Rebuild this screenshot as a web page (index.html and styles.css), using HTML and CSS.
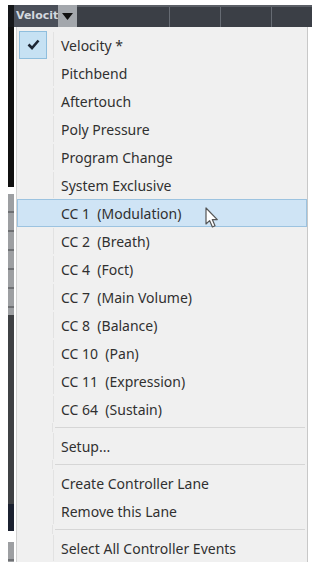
FILE: index.html
```html
<!DOCTYPE html>
<html lang="en">
<head>
<meta charset="utf-8">
<title>Controller lane menu</title>
<link rel="stylesheet" href="styles.css">
</head>
<body>
	<div class="screen">
		<!-- lane header strip -->
		<div class="header">
			<div class="hdr_edge"></div>
			<div class="lane_label">Velocit</div>
			<div class="lane_arrow">
				<svg width="11" height="7" viewBox="0 0 11 7"><path d="M0 0 L11 0 L5.5 7 Z" fill="#111"/></svg>
			</div>
			<div class="hdr_cells">
				<span class="cell c1"></span>
				<span class="cell c2"></span>
				<span class="cell c3"></span>
				<span class="cell c4"></span>
			</div>
		</div>

		<div class="main">
			<!-- left editor edge -->
			<div class="ruler">
				<div class="seg black" style="height: 163px"></div>
				<div class="seg blank" style="height: 7px"></div>
				<div class="seg ticks" style="height: 123px"></div>
				<div class="seg dark" style="height: 193px"></div>
				<div class="seg navy" style="height: 27px"></div>
				<div class="seg blank" style="height: 12px"></div>
				<div class="seg ticks" style="height: 20px"></div>
			</div>

			<div class="menu">
				<div class="item checked">
					<span class="gutter">
						<span class="check_box">
							<svg width="13" height="11" viewBox="0 0 13 11"><path d="M1.5 5.5 L5 9 L11.5 1.5" fill="none" stroke="#1d2633" stroke-width="2.6"/></svg>
						</span>
					</span>
					<span class="label">Velocity *</span>
				</div>
				<div class="item"><span class="gutter"></span><span class="label">Pitchbend</span></div>
				<div class="item"><span class="gutter"></span><span class="label">Aftertouch</span></div>
				<div class="item"><span class="gutter"></span><span class="label">Poly Pressure</span></div>
				<div class="item"><span class="gutter"></span><span class="label">Program Change</span></div>
				<div class="item"><span class="gutter"></span><span class="label">System Exclusive</span></div>
				<div class="item hover"><span class="gutter"></span><span class="label">CC 1&nbsp; (Modulation)</span></div>
				<div class="item"><span class="gutter"></span><span class="label">CC 2&nbsp; (Breath)</span></div>
				<div class="item"><span class="gutter"></span><span class="label">CC 4&nbsp; (Foct)</span></div>
				<div class="item"><span class="gutter"></span><span class="label">CC 7&nbsp; (Main Volume)</span></div>
				<div class="item"><span class="gutter"></span><span class="label">CC 8&nbsp; (Balance)</span></div>
				<div class="item"><span class="gutter"></span><span class="label">CC 10&nbsp; (Pan)</span></div>
				<div class="item"><span class="gutter"></span><span class="label">CC 11&nbsp; (Expression)</span></div>
				<div class="item"><span class="gutter"></span><span class="label">CC 64&nbsp; (Sustain)</span></div>
				<div class="sep"><span class="gutter"></span><span class="line"></span></div>
				<div class="item"><span class="gutter"></span><span class="label">Setup...</span></div>
				<div class="sep"><span class="gutter"></span><span class="line"></span></div>
				<div class="item"><span class="gutter"></span><span class="label">Create Controller Lane</span></div>
				<div class="item"><span class="gutter"></span><span class="label">Remove this Lane</span></div>
				<div class="sep"><span class="gutter"></span><span class="line"></span></div>
				<div class="item"><span class="gutter"></span><span class="label">Select All Controller Events</span></div>

				<!-- mouse pointer over the hovered entry -->
				<svg class="pointer" width="14" height="22" viewBox="0 0 14 22">
					<path d="M1 1 L1 17 L4.6 13.6 L7.4 20 L10 18.8 L7.3 12.6 L12.3 12.6 Z" fill="#fff" stroke="#555" stroke-width="1.2" stroke-linejoin="round"/>
				</svg>
			</div>
		</div>
	</div>
</body>
</html>
```

FILE: styles.css
```css
* {
	box-sizing: border-box;
}

html, body {
	margin: 0;
	padding: 0;
	background: #ffffff;
	overflow: hidden;
}

.screen {
	width: 312px;
	height: 562px;
	padding: 5px 0 0 8px;
	display: flex;
	flex-direction: column;
}

/* header strip */
.header {
	height: 22px;
	display: flex;
	flex-shrink: 0;
}

.hdr_edge {
	width: 6px;
	background: #15171a;
}

.lane_label {
	width: 44px;
	background: #4a4f59;
	color: #d3d8df;
	font: bold 11px "DejaVu Sans", sans-serif;
	line-height: 22px;
	padding-left: 2px;
	white-space: nowrap;
}

.lane_arrow {
	width: 19px;
	background: #a3a7ac;
	display: flex;
	align-items: center;
	justify-content: center;
}

.hdr_cells {
	flex: 1;
	display: flex;
	background: #3b3f46;
	border-top: 2px solid #5b5f66;
}

.cell {
	border-right: 1px solid #666b73;
}

.c1 { width: 93px; }
.c2 { width: 51px; }
.c3 { width: 51px; }
.c4 { flex: 1; border-right: none; }

/* body area */
.main {
	flex: 1;
	display: flex;
	gap: 2px;
	min-height: 0;
}

.ruler {
	width: 6px;
	display: flex;
	flex-direction: column;
}

.seg.black { background: #101010; }
.seg.blank { background: #ffffff; }
.seg.dark { background: #3f4144; }
.seg.navy { background: #1b2130; }
.seg.ticks {
	background: repeating-linear-gradient(to bottom, #9d9fa2 0, #9d9fa2 17px, #6f7174 17px, #6f7174 19px);
}

/* popup menu */
.menu {
	position: relative;
	width: 292px;
	padding-top: 4px;
	background: #f0f0f0;
	border-left: 1px solid #d2d2d2;
	border-right: 1px solid #c8c8c8;
	display: flex;
	flex-direction: column;
	font-family: "Noto Sans", "Open Sans", sans-serif;
	font-size: 14px;
	color: #303030;
}

.item {
	height: 28px;
	display: flex;
	align-items: center;
	flex-shrink: 0;
	border: 1px solid transparent;
}

.item.hover {
	background: #cfe4f5;
	border-color: #9cc3e0;
}

.gutter {
	width: 36px;
	height: 100%;
	flex-shrink: 0;
	display: flex;
	align-items: center;
	border-right: 1px solid #e2e2e2;
}

.item.hover .gutter {
	border-right-color: transparent;
}

.label {
	padding-left: 7px;
	white-space: nowrap;
}

.check_box {
	width: 28px;
	height: 28px;
	margin: -1px 0 0 1px;
	background: #c6e1f3;
	border: 1px solid #8fbedd;
	display: flex;
	align-items: center;
	justify-content: center;
}

.sep {
	height: 9px;
	display: flex;
	align-items: center;
	flex-shrink: 0;
}

.sep .gutter {
	border-right: 1px solid #e2e2e2;
}

.line {
	flex: 1;
	height: 1px;
	background: #d6d6d6;
	margin-left: 2px;
	margin-right: 2px;
}

.pointer {
	position: absolute;
	left: 188px;
	top: 180px;
}
```
